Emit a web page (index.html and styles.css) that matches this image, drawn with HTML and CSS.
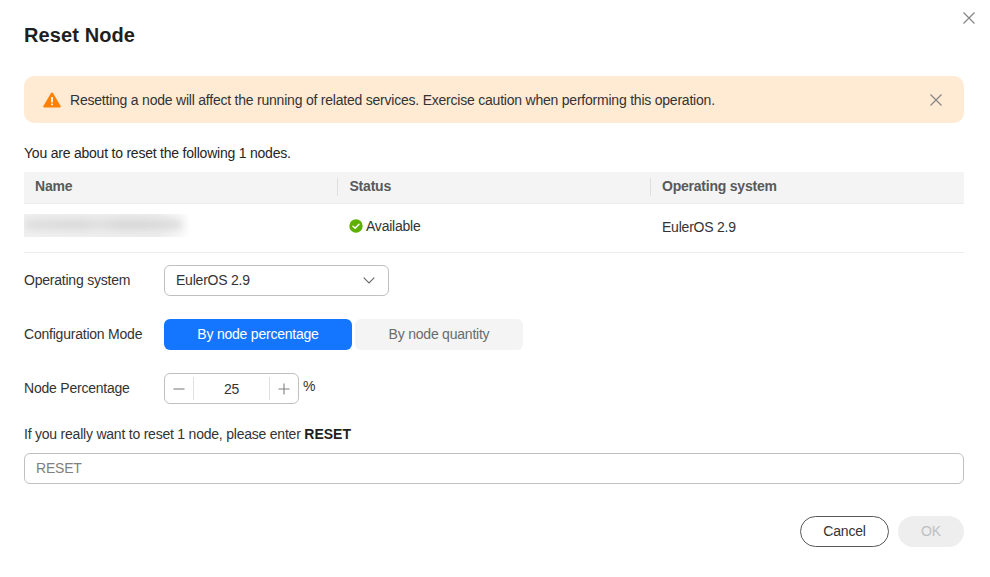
FILE: index.html
```html
<!DOCTYPE html>
<html lang="en">
<head>
<meta charset="utf-8">
<title>Reset Node</title>
<link rel="stylesheet" href="styles.css">
</head>
<body>
<div class="dialog">
  <button class="dialog-close" aria-label="Close">
    <svg width="14" height="14" viewBox="0 0 14 14"><path d="M1.5 1.5l11 11M12.5 1.5l-11 11" class="x"/></svg>
  </button>
  <h1 class="title">Reset Node</h1>
  <div class="alert">
    <svg class="alert-icon" width="18" height="16" viewBox="0 0 18 16"><path d="M9 .6c.5 0 .9.3 1.1.6l7.5 12.7c.4.7-.1 1.6-.9 1.6H1.3c-.8 0-1.3-.9-.9-1.6L7.9 1.2C8.1.9 8.5.6 9 .6z" fill="#ff8000"/><rect x="8.1" y="5" width="1.8" height="5.4" rx=".5" fill="#fff"/><rect x="8.1" y="11.4" width="1.8" height="1.9" rx=".5" fill="#fff"/></svg>
    <span class="alert-text">Resetting a node will affect the running of related services. Exercise caution when performing this operation.</span>
    <svg class="alert-close" width="14" height="14" viewBox="0 0 14 14"><path d="M1.5 1.5l11 11M12.5 1.5l-11 11" class="x"/></svg>
  </div>
  <p class="intro">You are about to reset the following 1 nodes.</p>
  <div class="table">
    <div class="thead">
      <div class="th th-first">Name</div>
      <div class="th th-status"><span class="sep"></span>Status</div>
      <div class="th"><span class="sep"></span>Operating system</div>
    </div>
    <div class="tbody">
      <div class="td td-first"><div class="blurred"><div class="blurred-bar"></div></div></div>
      <div class="td td-status">
        <svg width="14" height="14" viewBox="0 0 14 14"><circle cx="7" cy="7" r="6.7" fill="#5eb000"/><path d="M4 7.2l2.1 2 3.9-3.9" fill="none" stroke="#fff" stroke-width="1.5" stroke-linecap="round" stroke-linejoin="round"/></svg>
        <span>Available</span>
      </div>
      <div class="td td-os">EulerOS 2.9</div>
    </div>
  </div>
  <div class="form-row row-os">
    <label class="label">Operating system</label>
    <div class="select">
      <span>EulerOS 2.9</span>
      <svg width="12" height="7" viewBox="0 0 12 7"><path d="M.7.7L6 6l5.3-5.3" fill="none" stroke="#6b6b6b" stroke-width="1.2"/></svg>
    </div>
  </div>
  <div class="form-row row-mode">
    <label class="label">Configuration Mode</label>
    <div class="seg">
      <div class="seg-btn seg-on">By node percentage</div>
      <div class="seg-btn seg-off">By node quantity</div>
    </div>
  </div>
  <div class="form-row row-pct">
    <label class="label">Node Percentage</label>
    <div class="stepper">
      <span class="step step-minus"><svg width="12" height="12" viewBox="0 0 12 12"><path d="M.5 6h11" class="st"/></svg></span>
      <span class="step-val">25</span>
      <span class="step step-plus"><svg width="12" height="12" viewBox="0 0 12 12"><path d="M.5 6h11M6 .5v11" class="st"/></svg></span>
    </div>
    <span class="unit">%</span>
  </div>
  <p class="confirm">If you really want to reset 1 node, please enter <b>RESET</b></p>
  <div class="input">RESET</div>
  <div class="footer">
    <button class="btn btn-cancel">Cancel</button>
    <button class="btn btn-ok">OK</button>
  </div>
</div>
</body>
</html>
```
FILE: styles.css
```css
* { box-sizing: border-box; }
html, body { margin: 0; padding: 0; background: #fff; }
body {
  font-family: "Liberation Sans", Arial, sans-serif;
  font-size: 14px;
  letter-spacing: -.22px;
  color: #252525;
  overflow: hidden;
}
.dialog {
  position: relative;
  width: 990px;
  height: 577px;
  padding: 23px 26px 0 24px;
  display: flex;
  flex-direction: column;
}
.x { fill: none; stroke: #858585; stroke-width: 1.2; }
.dialog-close {
  position: absolute;
  top: 11px;
  right: 14px;
  width: 14px;
  height: 14px;
  padding: 0;
  border: 0;
  background: none;
  display: block;
}
.dialog-close svg { display: block; }
.title {
  margin: 0;
  font-size: 20px;
  line-height: 24px;
  font-weight: 700;
  letter-spacing: .1px;
  color: #1f1f1f;
}
.alert {
  margin-top: 29px;
  height: 47px;
  background: #ffebd4;
  border-radius: 10px;
  display: flex;
  align-items: center;
  padding: 0 21px 0 19px;
}
.alert-icon { flex: none; margin-right: 9px; }
.alert-text { flex: 1; color: #333; }
.alert-close { flex: none; }
.intro { margin: 22px 0 0; line-height: 16px; }
.table { margin-top: 11px; }
.thead {
  display: grid;
  grid-template-columns: 313px 313px 1fr;
  height: 32px;
  background: #f4f4f4;
  border-bottom: 1px solid #ececec;
}
.th {
  position: relative;
  display: flex;
  align-items: center;
  padding: 0 0 3px 12px;
  font-weight: 700;
  color: #595959;
}
.th-first { padding-left: 11px; }
.th-status { padding-left: 12.5px; }
.sep {
  position: absolute;
  left: 0;
  top: 6px;
  height: 18px;
  width: 1px;
  background: #dfdfdf;
}
.tbody {
  display: grid;
  grid-template-columns: 313px 313px 1fr;
  height: 49px;
  border-bottom: 1px solid #ececec;
}
.td { display: flex; align-items: center; padding-left: 12px; color: #333; }
.td-first { padding: 0 0 5px; }
.blurred {
  width: 166px;
  height: 23px;
  overflow: hidden;
  padding-top: 6px;
  background: linear-gradient(90deg, #f1f1f1 0, #eeeeee 80%, #fff 100%);
}
.blurred-bar {
  width: 158px;
  height: 9px;
  background: linear-gradient(90deg, #dadada 0, #d2d2d2 35%, #dcdcdc 48%, #d0d0d0 62%, #d6d6d6 100%);
  filter: blur(5px);
}
.td-status { gap: 3px; padding-bottom: 5px; }
.td-status svg { flex: none; }
.td-os { padding-bottom: 3px; }
.form-row { display: flex; align-items: center; }
.label { width: 140px; flex: none; color: #333; padding-bottom: 2px; }
.row-os { margin-top: 12px; }
.select {
  width: 225px;
  height: 31px;
  border: 1px solid #c0c0c0;
  border-radius: 6px;
  display: flex;
  align-items: center;
  justify-content: space-between;
  padding: 0 13px 0 11px;
  color: #333;
}
.select span { padding-bottom: 2px; }
.row-mode { margin-top: 23px; }
.seg { display: flex; gap: 3px; }
.seg-btn {
  height: 31px;
  border-radius: 6px;
  display: flex;
  align-items: center;
  justify-content: center;
  padding-bottom: 2px;
}
.seg-on { width: 188px; background: #1476ff; color: #fff; font-weight: 400; }
.seg-off { width: 168px; background: #f4f4f4; color: #6b6b6b; }
.row-pct { margin-top: 23px; }
.stepper {
  width: 135px;
  height: 31px;
  border: 1px solid #c0c0c0;
  border-radius: 6px;
  display: grid;
  grid-template-columns: 29px 1fr 29px;
  align-items: center;
  color: #333;
}
.step { display: flex; align-items: center; justify-content: center; height: 23px; }
.step svg { display: block; }
.st { fill: none; stroke: #808080; stroke-width: 1.1; }
.step-minus { border-right: 1px solid #dfdfdf; }
.step-plus { border-left: 1px solid #dfdfdf; }
.step-val { text-align: center; }
.unit { margin-left: 4px; padding-bottom: 5px; color: #333; }
.confirm { margin: 22px 0 0; line-height: 16px; color: #333; }
.confirm b { color: #1f1f1f; letter-spacing: 0; }
.input {
  margin-top: 11px;
  height: 31px;
  border: 1px solid #c0c0c0;
  border-radius: 6px;
  padding: 0 11px 2px;
  display: flex;
  align-items: center;
  color: #808080;
}
.footer { margin-top: 32px; display: flex; justify-content: flex-end; gap: 9px; }
.btn {
  height: 31px;
  border-radius: 16px;
  font: inherit;
  letter-spacing: inherit;
  padding: 0 0 2px;
}
.btn-cancel { width: 89px; background: #fff; border: 1px solid #595959; color: #333; }
.btn-ok { width: 66px; background: #eeeeee; border: 0; color: #bfbfbf; }
```
